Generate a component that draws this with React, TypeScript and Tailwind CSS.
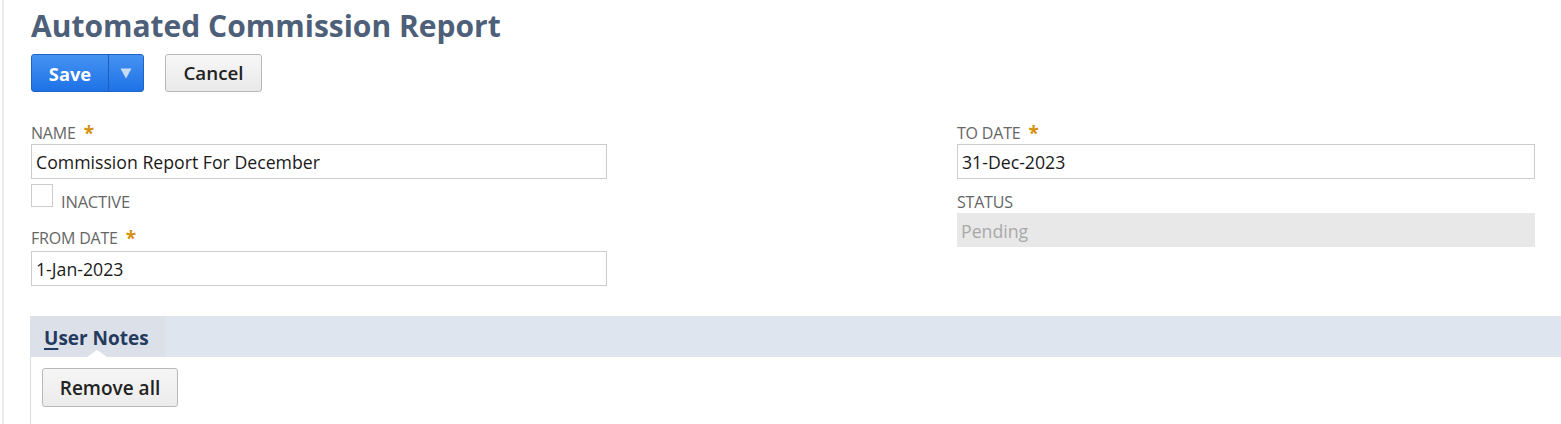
import React from "react";

const font = { fontFamily: '"Open Sans", "Liberation Sans", sans-serif' };

function Label({ text, required }: { text: string; required?: boolean }) {
  return (
    <div className="flex items-center text-[16px] leading-[20px] uppercase text-[#666666] tracking-[-0.2px]">
      <span>{text}</span>
      {required && <span className="ml-[8px] text-[#d5900f] text-[19px] font-bold leading-[20px]">*</span>}
    </div>
  );
}

function Input({ value }: { value: string }) {
  return (
    <div className="h-[35px] border border-[#cccccc] bg-white flex items-center px-[4px] pt-[2px] text-[17.7px] text-[#1a1a1a]">
      {value}
    </div>
  );
}

export default function App() {
  return (
    <div style={font} className="w-[1561px] h-[424px] bg-white overflow-hidden pl-[2px]">
      <div className="h-full border-l-2 border-[#ececec] pl-[27px]">
        <h1 className="pt-[8px] text-[30px] leading-[36px] font-bold text-[#4d5f79]">
          Automated Commission Report
        </h1>
        <div className="mt-[10px] flex gap-[21px]">
          <div className="flex h-[38px] rounded-[3px] border border-[#1f63c4] bg-gradient-to-b from-[#4592f2] to-[#1d72e6] overflow-hidden">
            <div className="w-[76px] flex items-center justify-center pt-[1px] text-white font-bold text-[18.3px]">Save</div>
            <div className="w-px bg-[#1e5db8]" />
            <div className="w-[34px] flex items-center justify-center">
              <svg width="12" height="11" viewBox="0 0 12 11">
                <path d="M0.5 0.5 L11.5 0.5 L6 10.5 Z" fill="#c7dbf7" />
              </svg>
            </div>
          </div>
          <div className="h-[38px] w-[97px] rounded-[3px] border border-[#b8b8b8] bg-gradient-to-b from-[#f7f7f7] to-[#e9e9e9] flex items-center justify-center pt-[1px] text-[18.8px] font-semibold text-[#222222]">
            Cancel
          </div>
        </div>

        <div className="mt-[31px] flex gap-[350px]">
          <div className="w-[576px] flex flex-col">
            <Label text="Name" required />
            <div className="mt-[1px]">
              <Input value="Commission Report For December" />
            </div>
            <div className="mt-[5px] flex items-end">
              <div className="w-[22px] h-[23px] border border-[#cccccc] bg-white" />
              <span className="ml-[8px] text-[16.5px] leading-[20px] text-[#666666] uppercase tracking-[-0.2px] translate-y-[5px]">Inactive</span>
            </div>
            <div className="mt-[21px]">
              <Label text="From Date" required />
            </div>
            <div className="mt-[3px]">
              <Input value="1-Jan-2023" />
            </div>
          </div>
          <div className="w-[578px] flex flex-col">
            <Label text="To Date" required />
            <div className="mt-[1px]">
              <Input value="31-Dec-2023" />
            </div>
            <div className="mt-[13px]">
              <Label text="Status" />
            </div>
            <div className="mt-[1px] h-[34px] bg-[#e8e8e8] flex items-center px-[4px] pt-[2px] text-[17.7px] text-[#a8a8a8]">
              Pending
            </div>
          </div>
        </div>

        <div className="mt-[30px] -ml-px">
          <div className="h-[41px] bg-[#dfe5ef] flex">
            <div className="relative w-[135px] h-full bg-[#dce0e9] flex items-center pl-[14px] pt-[4px] text-[19px] font-bold text-[#243a5e]">
              <span>
                <span className="underline underline-offset-[3px] decoration-[2px]">U</span>ser Notes
              </span>
              <div className="absolute bottom-0 left-[57px] w-0 h-0 border-l-[10px] border-r-[10px] border-b-[7px] border-l-transparent border-r-transparent border-b-white" />
            </div>
          </div>
          <div className="border-l border-[#dddddd] h-[80px] pl-[11px] pt-[11px]">
            <div className="w-[136px] h-[39px] rounded-[3px] border border-[#b8b8b8] bg-gradient-to-b from-[#f5f5f5] to-[#ececec] flex items-center justify-center pt-[1px] text-[19px] font-semibold text-[#222222]">
              Remove all
            </div>
          </div>
        </div>
      </div>
    </div>
  );
}
